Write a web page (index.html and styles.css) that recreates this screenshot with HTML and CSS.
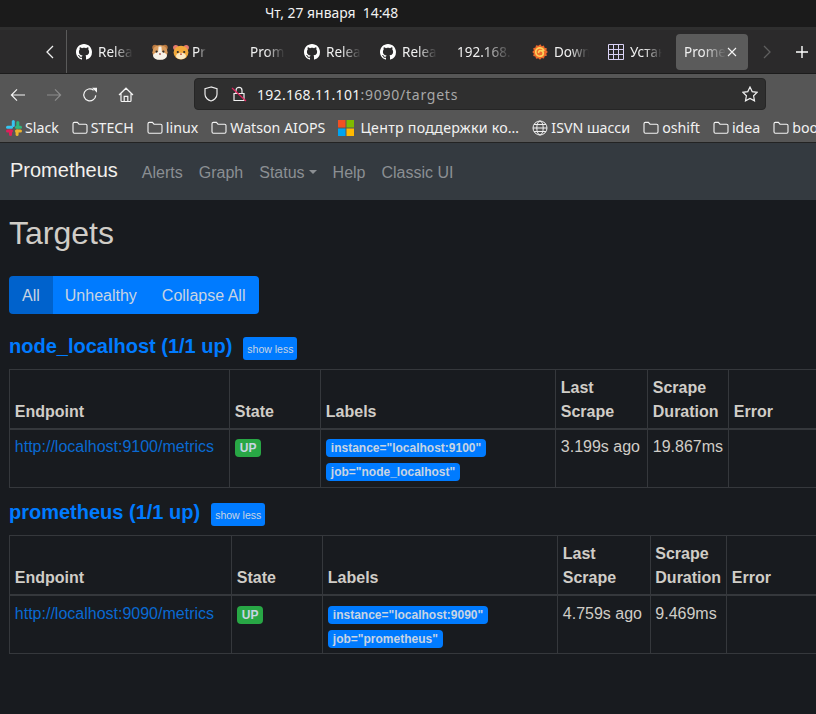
FILE: index.html
```html
<!DOCTYPE html>
<html lang="ru">
<head>
<meta charset="utf-8">
<title>Prometheus Time Series Collection and Processing Server</title>
<link rel="stylesheet" href="styles.css">
</head>
<body>
<svg class="defs" width="0" height="0" aria-hidden="true">
  <symbol id="gh" viewBox="0 0 16 16"><path fill="#fff" d="M8 0C3.58 0 0 3.58 0 8c0 3.54 2.29 6.53 5.47 7.59.4.07.55-.17.55-.38 0-.19-.01-.82-.01-1.49-2.01.37-2.53-.49-2.69-.94-.09-.23-.48-.94-.82-1.13-.28-.15-.68-.52-.01-.53.63-.01 1.08.58 1.23.82.72 1.21 1.87.87 2.33.66.07-.52.28-.87.51-1.07-1.78-.2-3.64-.89-3.64-3.95 0-.87.31-1.59.82-2.15-.08-.2-.36-1.02.08-2.12 0 0 .67-.21 2.2.82.64-.18 1.32-.27 2-.27s1.36.09 2 .27c1.53-1.04 2.2-.82 2.2-.82.44 1.1.16 1.92.08 2.12.51.56.82 1.27.82 2.15 0 3.07-1.87 3.75-3.65 3.95.29.25.54.73.54 1.48 0 1.07-.01 1.93-.01 2.2 0 .21.15.46.55.38A8.01 8.01 0 0 0 16 8c0-4.42-3.58-8-8-8z"/></symbol>
  <symbol id="folder" viewBox="0 0 16 16"><path fill="none" stroke="#f4f4f4" stroke-width="1.100" d="M1 3.800c0-.9.6-1.400 1.400-1.400h3l1.600 1.800h6.600c.8 0 1.400.6 1.400 1.400v6.200c0 .8-.6 1.400-1.400 1.400H2.400c-.8 0-1.400-.6-1.400-1.400z"/></symbol>
</svg>

<div class="topbar">
  <span class="clock">Чт, 27 января&nbsp; 14:48</span>
</div>

<div class="tabbar">
  <div class="tabs-back">
    <svg width="10" height="16" viewBox="0 0 10 16"><path fill="none" stroke="#f0f0f0" stroke-width="1.300" d="M8 2 2 8l6 6"/></svg>
  </div>
  <div class="tab"><svg class="tab-icon"><use href="#gh"/></svg><span class="tab-label">Release</span></div>
  <div class="tab tab-pair">
    <svg class="tab-icon" viewBox="0 0 16 16"><circle cx="3" cy="3.400" r="2.700" fill="#b9773f"/><circle cx="13" cy="3.400" r="2.700" fill="#b9773f"/><ellipse cx="8" cy="8.200" rx="7.600" ry="7.300" fill="#d99b5c"/><ellipse cx="8" cy="11.800" rx="7" ry="4" fill="#f7f2e8"/><path fill="#f7f2e8" d="M6.600 2.500h2.800L10 9H6z"/><circle cx="4.600" cy="7.600" r="1.100" fill="#2a2a2a"/><circle cx="11.400" cy="7.600" r="1.100" fill="#2a2a2a"/><circle cx="8" cy="10" r=".9" fill="#a8584f"/></svg>
    <svg class="tab-icon" viewBox="0 0 16 16"><circle cx="2.800" cy="3.600" r="2.700" fill="#e77b6e"/><circle cx="13.200" cy="3.600" r="2.700" fill="#e77b6e"/><ellipse cx="8" cy="8.600" rx="7.400" ry="6.900" fill="#f2a93b"/><ellipse cx="8" cy="12" rx="5" ry="3.200" fill="#f8e8c4"/><circle cx="4.800" cy="8" r="1.100" fill="#2a2a2a"/><circle cx="11.200" cy="8" r="1.100" fill="#2a2a2a"/><circle cx="8" cy="10.200" r=".9" fill="#c2543f"/></svg>
    <span class="tab-label tab-label-short">Pr</span></div>
  <div class="tab"><span class="tab-icon-blank"></span><span class="tab-label">Prometheus</span></div>
  <div class="tab"><svg class="tab-icon"><use href="#gh"/></svg><span class="tab-label">Release</span></div>
  <div class="tab"><svg class="tab-icon"><use href="#gh"/></svg><span class="tab-label">Release</span></div>
  <div class="tab"><span class="tab-label tab-label-ip">192.168.11</span></div>
  <div class="tab"><svg class="tab-icon" viewBox="0 0 16 16"><path fill="#ee6a2b" d="M8.400.2l1.300 2 2.300-.7.500 2.300 2.300.4-.4 2.300 1.500 1.400-1.600 1.600.6 2.300-2.300.5-.6 2.300-2.300-.5L8 15.800l-1.700-1.600-2.200.6-.7-2.200-2.200-.7.600-2.300L.2 8l1.600-1.600-.6-2.200 2.300-.6.500-2.300 2.300.5z"/><path fill="none" stroke="#fbd25a" stroke-width="1.700" d="M12 7A4.200 4.200 0 1 0 8.300 12.200a2.800 2.800 0 0 0 .3-5.600A1.700 1.700 0 0 0 6.800 9"/></svg><span class="tab-label">Download</span></div>
  <div class="tab"><svg class="tab-icon" viewBox="0 0 16 16"><path fill="none" stroke="#d9d2f5" stroke-width="1" d="M.5.500h15v15H.5zM5.500.5v15M10.500.5v15M.5 5.500h15M.5 10.500h15"/></svg><span class="tab-label tab-label-ru">Установка</span></div>
  <div class="tab tab-active"><span class="tab-label tab-label-active">Prometheus</span><span class="tab-close">
    <svg width="10" height="10" viewBox="0 0 10 10"><path stroke="#f4f4f4" stroke-width="1.100" d="M1 1l8 8M9 1 1 9"/></svg></span></div>
  <div class="tabs-forward">
    <svg width="10" height="16" viewBox="0 0 10 16"><path fill="none" stroke="#5f5f5f" stroke-width="1.300" d="M2 2l6 6-6 6"/></svg>
  </div>
  <div class="tabs-new">
    <svg width="14" height="14" viewBox="0 0 14 14"><path stroke="#fff" stroke-width="1.400" d="M7 1v12M1 7h12"/></svg>
  </div>
</div>

<div class="toolbar">
  <div class="tool-btns">
    <svg class="tool" viewBox="0 0 16 16"><path fill="none" stroke="#f4f4f4" stroke-width="1.200" d="M15 8H1.500M7 2.400 1.400 8 7 13.600"/></svg>
    <svg class="tool" viewBox="0 0 16 16"><path fill="none" stroke="#8c8c8c" stroke-width="1.200" d="M1 8h13.500M9 2.400 14.600 8 9 13.600"/></svg>
    <svg class="tool" viewBox="0 0 16 16"><path fill="none" stroke="#f4f4f4" stroke-width="1.200" d="M13.800 8.400A6 6 0 1 1 11.600 3.200"/><path fill="#f4f4f4" d="M10 .8h5v5z"/></svg>
    <svg class="tool" viewBox="0 0 16 16"><path fill="none" stroke="#f4f4f4" stroke-width="1.200" d="M1 8 8 1.200 15 8M3 6.400v7.200c0 .6.3.9.9.9h8.200c.6 0 .9-.3.9-.9V6.400M6.200 14.500V9.400h3.600v5.100"/></svg>
  </div>
  <div class="urlbar">
    <svg class="url-shield" viewBox="0 0 16 16"><path fill="none" stroke="#ececec" stroke-width="1.200" d="M8 1 2 2.800v5.400C2 12 5.400 14.400 8 15c2.600-.6 6-3 6-6.800V2.800z"/></svg>
    <svg class="url-lock" viewBox="0 0 16 16"><path fill="none" stroke="#f0f0f0" stroke-width="1.200" d="M3 7.500h10v7H3zM5 7.500V4.400a3 3 0 0 1 6 0v3.100"/><path stroke="#e0245e" stroke-width="1.200" d="M1 2l14 13"/></svg>
    <span class="url-text"><span class="url-host">192.168.11.101</span>:9090/targets</span>
    <svg class="url-star" viewBox="0 0 16 16"><path fill="none" stroke="#f0f0f0" stroke-width="1.200" d="M8 1l2.200 4.600 5 .7-3.600 3.500.9 5L8 12.400l-4.500 2.400.9-5L.8 6.300l5-.7z"/></svg>
  </div>
</div>

<div class="bookmarks">
  <span class="bm"><svg class="bm-icon" viewBox="0 0 16 16"><rect x="5.800" y="0" width="3" height="7" rx="1.500" fill="#36c5f0"/><rect x="0" y="5.800" width="7" height="3" rx="1.500" fill="#36c5f0"/><rect x="10.300" y="1" width="3" height="7.500" rx="1.500" fill="#2eb67d"/><rect x="9" y="5.800" width="7" height="3" rx="1.500" fill="#2eb67d"/><rect x="0" y="9.600" width="7" height="3" rx="1.500" fill="#e01e5a"/><rect x="3" y="9.600" width="3" height="6.400" rx="1.500" fill="#e01e5a"/><rect x="9" y="9.600" width="7" height="3" rx="1.500" fill="#ecb22e"/><rect x="9.600" y="9.600" width="3" height="6.400" rx="1.500" fill="#ecb22e"/></svg>Slack</span>
  <span class="bm"><svg class="bm-icon"><use href="#folder"/></svg>STECH</span>
  <span class="bm"><svg class="bm-icon"><use href="#folder"/></svg>linux</span>
  <span class="bm"><svg class="bm-icon"><use href="#folder"/></svg>Watson AIOPS</span>
  <span class="bm bm-ms"><svg class="bm-icon" viewBox="0 0 16 16"><rect width="7.500" height="7.500" fill="#f25022"/><rect x="8.500" width="7.500" height="7.500" fill="#7fba00"/><rect y="8.500" width="7.500" height="7.500" fill="#00a4ef"/><rect x="8.500" y="8.500" width="7.500" height="7.500" fill="#ffb900"/></svg>Центр поддержки ко…</span>
  <span class="bm"><svg class="bm-icon" viewBox="0 0 16 16"><g fill="none" stroke="#f0f0f0" stroke-width="1"><circle cx="8" cy="8" r="7"/><ellipse cx="8" cy="8" rx="3.200" ry="7"/><path d="M1 8h14M2 4.500h12M2 11.500h12"/></g></svg>ISVN шасси</span>
  <span class="bm"><svg class="bm-icon"><use href="#folder"/></svg>oshift</span>
  <span class="bm"><svg class="bm-icon"><use href="#folder"/></svg>idea</span>
  <span class="bm"><svg class="bm-icon"><use href="#folder"/></svg>books</span>
</div>

<nav class="navbar">
  <a class="brand" href="#">Prometheus</a>
  <a class="nav-link" href="#">Alerts</a>
  <a class="nav-link" href="#">Graph</a>
  <a class="nav-link nav-status" href="#">Status<span class="caret"></span></a>
  <a class="nav-link" href="#">Help</a>
  <a class="nav-link" href="#">Classic UI</a>
</nav>

<main class="page">
  <h1 class="title">Targets</h1>
  <div class="btn-group">
    <button class="btn btn-active">All</button><button class="btn">Unhealthy</button><button class="btn">Collapse All</button>
  </div>

  <section class="pool">
    <div class="pool-head">
      <a class="pool-name" href="#">node_localhost (1/1 up)</a>
      <button class="btn-small">show less</button>
    </div>
    <table class="targets">
      <colgroup>
        <col class="c1-a"><col class="c2-a"><col class="c3-a"><col class="c4-a"><col class="c5-a"><col class="c6-a">
      </colgroup>
      <thead>
        <tr><th>Endpoint</th><th>State</th><th>Labels</th><th>Last Scrape</th><th>Scrape Duration</th><th>Error</th></tr>
      </thead>
      <tbody>
        <tr>
          <td><a class="endpoint" href="#">http://localhost:9100/metrics</a></td>
          <td><span class="badge badge-up">UP</span></td>
          <td><span class="badge badge-label">instance="localhost:9100"</span><br><span class="badge badge-label">job="node_localhost"</span></td>
          <td>3.199s ago</td>
          <td>19.867ms</td>
          <td></td>
        </tr>
      </tbody>
    </table>
  </section>

  <section class="pool">
    <div class="pool-head">
      <a class="pool-name" href="#">prometheus (1/1 up)</a>
      <button class="btn-small">show less</button>
    </div>
    <table class="targets">
      <colgroup>
        <col class="c1-b"><col class="c2-b"><col class="c3-b"><col class="c4-b"><col class="c5-b"><col class="c6-b">
      </colgroup>
      <thead>
        <tr><th>Endpoint</th><th>State</th><th>Labels</th><th>Last Scrape</th><th>Scrape Duration</th><th>Error</th></tr>
      </thead>
      <tbody>
        <tr>
          <td><a class="endpoint" href="#">http://localhost:9090/metrics</a></td>
          <td><span class="badge badge-up">UP</span></td>
          <td><span class="badge badge-label">instance="localhost:9090"</span><br><span class="badge badge-label">job="prometheus"</span></td>
          <td>4.759s ago</td>
          <td>9.469ms</td>
          <td></td>
        </tr>
      </tbody>
    </table>
  </section>
</main>
</body>
</html>
```
FILE: styles.css
```css
* { box-sizing: border-box; }
html, body { margin: 0; padding: 0; height: 100%; overflow: hidden; }
body {
  background: #181b1f;
  color: #d0cdc7;
  font-family: "Liberation Sans", Arial, sans-serif;
  font-size: 16px;
  line-height: 24px;
}
a { text-decoration: none; }
.defs { display: block; height: 0; }

/* desktop + browser chrome */
.topbar {
  height: 30px;
  background: #1b1b1b;
  border-bottom: 3px solid #2f2f2f;
  padding-left: 265px;
  font-family: "Noto Sans", sans-serif;
  font-size: 13.900px;
  line-height: 26px;
  color: #f2f2f2;
  white-space: nowrap;
}
.tabbar {
  height: 44px;
  background: #2b2a2b;
  border-bottom: 1px solid #1c1c1c;
  display: flex;
  align-items: center;
  font-family: "Noto Sans", sans-serif;
  font-size: 13.500px;
  color: #f0f0f0;
  overflow: hidden;
}
.tabs-back {
  width: 67px;
  height: 43px;
  flex: none;
  border-right: 1px solid #5a5a5a;
  display: flex;
  align-items: center;
  padding-left: 45px;
}
.tab {
  width: 76px;
  height: 36px;
  flex: none;
  display: flex;
  align-items: center;
  padding-left: 9px;
  gap: 6px;
  white-space: nowrap;
  overflow: hidden;
}
.tab-pair { gap: 5px; }
.tab-icon { width: 16px; height: 16px; flex: none; }
.tab-icon-blank { width: 16px; flex: none; }
.tab-label {
  overflow: hidden;
  width: 35px;
  -webkit-mask-image: linear-gradient(to right, #000 45%, transparent 100%);
  mask-image: linear-gradient(to right, #000 45%, transparent 100%);
}
.tab-label-short { width: 14px; margin-left: -2px; }
.tab-label-ip { width: 55px; margin-left: 1px; }
.tab-label-ru { width: 32px; }
.tab-active {
  width: 72px;
  margin-left: 1px;
  margin-right: 3px;
  background: #5b5b5b;
  border-radius: 4px;
  padding-left: 8px;
  gap: 0;
}
.tab-label-active { width: 42px; }
.tab-close { display: flex; margin-left: 1px; }
.tabs-forward { width: 44px; flex: none; display: flex; padding-left: 11px; }
.tabs-new { width: 30px; flex: none; display: flex; }

.toolbar {
  height: 40px;
  background: #565656;
  display: flex;
  align-items: center;
}
.tool-btns {
  width: 194px;
  flex: none;
  display: flex;
  padding-left: 10px;
  padding-top: 2px;
  gap: 20px;
}
.tool { width: 16px; height: 16px; flex: none; }
.urlbar {
  width: 572px;
  height: 32px;
  flex: none;
  background: #2f2f2f;
  border: 1px solid #262626;
  border-radius: 4px;
  display: flex;
  align-items: center;
  padding-left: 8px;
  font-family: "Noto Sans", sans-serif;
  font-size: 14px;
  color: #a8a8a8;
}
.url-shield { width: 16px; height: 16px; flex: none; }
.url-lock { width: 16px; height: 16px; flex: none; margin-left: 12px; }
.url-text { margin-left: 10px; margin-top: 1px; flex: 1; letter-spacing: 0.750px; }
.url-host { color: #f4f4f4; letter-spacing: 0.300px; }
.url-star { width: 16px; height: 16px; flex: none; margin-right: 7px; }

.bookmarks {
  height: 29px;
  background: #565656;
  display: flex;
  align-items: center;
  padding-left: 6px;
  gap: 13px;
  font-family: "Noto Sans", sans-serif;
  font-size: 14.200px;
  color: #f2f2f2;
  white-space: nowrap;
  overflow: hidden;
  border-bottom: 1px solid #232323;
}
.bm { display: flex; align-items: center; gap: 3px; flex: none; }
.bm-ms { gap: 6px; letter-spacing: 0.250px; }
.bm-icon { width: 16px; height: 16px; flex: none; }

/* Prometheus page */
.navbar {
  height: 57px;
  background: #343a40;
  display: flex;
  align-items: center;
  padding-left: 10px;
}
.brand {
  color: #f2f0ed;
  font-size: 20px;
  line-height: 30px;
  margin-right: 16px;
  margin-top: -4px;
}
.nav-link {
  color: #8b8f93;
  padding: 2px 8px 0;
}
.nav-status { display: flex; align-items: center; }
.caret {
  margin-left: 4px;
  border-top: 4.800px solid #8b8f93;
  border-left: 4.800px solid transparent;
  border-right: 4.800px solid transparent;
  margin-top: -2px;
}
.page { padding-left: 9px; width: 830px; }
.title {
  margin: 0;
  padding-top: 14px;
  font-size: 32px;
  font-weight: 400;
  line-height: 38px;
  color: #d0cdc7;
}
.btn-group {
  display: flex;
  margin-top: 24px;
  margin-bottom: 9px;
  width: 250px;
}
.btn {
  height: 38px;
  padding: 2px 12px 0;
  border: 0;
  background: #007bff;
  color: #c8d4e3;
  font: inherit;
  white-space: nowrap;
}
.btn:first-child { border-radius: 4px 0 0 4px; padding: 2px 13px 0; }
.btn:last-child { border-radius: 0 4px 4px 0; flex: 1; padding: 2px 13px 0; text-align: left; }
.btn-active { background: #0062cc; }

.pool + .pool { margin-top: 1px; }
.pool-head {
  height: 46px;
  display: flex;
  align-items: center;
}
.pool-name {
  color: #007bff;
  font-size: 20px;
  font-weight: 700;
  line-height: 24px;
}
.btn-small {
  margin-left: 11px;
  margin-top: 5px;
  height: 23px;
  padding: 1px 4px 0;
  border: 0;
  border-radius: 3px;
  background: #007bff;
  color: #c8d4e3;
  font: 10.500px "Liberation Sans", Arial, sans-serif;
}
.targets {
  border-collapse: collapse;
  table-layout: fixed;
  width: 820px;
}
.targets th, .targets td {
  border: 1px solid #35383c;
  padding: 5.800px 4.800px 3.800px;
  text-align: left;
  vertical-align: top;
}
.targets th {
  vertical-align: bottom;
  border-bottom-width: 2px;
  font-weight: 700;
}
.c1-a { width: 220px; } .c2-a { width: 91px; } .c3-a { width: 235px; }
.c4-a { width: 92px; } .c5-a { width: 81px; } .c6-a { width: 101px; }
.c1-b { width: 222px; } .c2-b { width: 91px; } .c3-b { width: 235px; }
.c4-b { width: 92.500px; } .c5-b { width: 76.500px; } .c6-b { width: 103px; }
.endpoint { color: #0a6ad2; }
.badge {
  display: inline-block;
  height: 18px;
  padding: 0 5px;
  border-radius: 4px;
  font-size: 12px;
  font-weight: 700;
  line-height: 18px;
  color: #c8d4e3;
  vertical-align: top;
}
.badge-up { background: #28a745; margin-top: 4px; }
.badge-label { background: #007bff; margin-top: 4px; margin-bottom: 2px; }
```
